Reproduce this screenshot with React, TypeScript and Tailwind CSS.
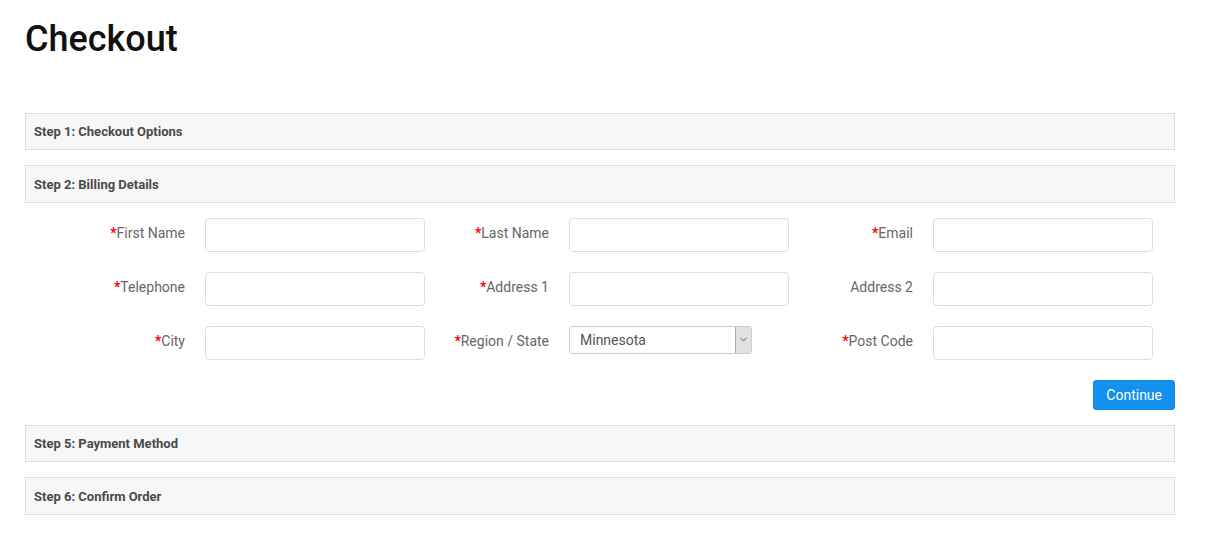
import { ChevronDown } from 'lucide-react'

function Panel({ title }: { title: string }) {
  return (
    <div className="h-[37.5px] bg-[#f7f7f7] border border-[#dddddd] flex items-center px-[8px] pt-[1px]">
      <span className="text-[13px] font-bold text-[#4a4a4a]">{title}</span>
    </div>
  )
}

function Field({ label, required, children }: { label: string; required?: boolean; children?: React.ReactNode }) {
  return (
    <div className="flex items-start gap-[20px] w-[364px] shrink-0">
      <label className="w-[124px] shrink-0 pt-[5px] leading-[20px] text-right text-[14px] text-[#666666]">
        {required && <span className="text-[#ff0000] font-bold">*</span>}
        {label}
      </label>
      {children ?? (
        <input className="w-[220px] h-[34px] shrink-0 border border-[#dddddd] rounded-[4px] bg-white" />
      )}
    </div>
  )
}

function RegionSelect() {
  return (
    <div className="w-[220px] h-[34px] flex items-start">
      <div className="w-[183px] h-[28px] border border-[#cccccc] rounded-[3px] bg-white flex items-center justify-between text-[14px] text-[#555555]">
        <span className="pl-[10px] pt-[1px]">Minnesota</span>
        <div className="w-[16px] h-full bg-[#e1e1e1] border-l border-[#aaaaaa] flex items-center justify-center rounded-r-[2px]">
          <ChevronDown className="w-[11px] h-[11px] text-[#333333]" strokeWidth={1.75} />
        </div>
      </div>
    </div>
  )
}

export default function App() {
  return (
    <div className="min-h-screen bg-white px-[25px] pt-[20px]" style={{ fontFamily: 'Roboto, "Liberation Sans", sans-serif' }}>
      <h1 className="text-[36px] font-medium leading-[1.1] text-[#111111]">Checkout</h1>

      <div className="mt-[53px] w-[1150px] flex flex-col">
        <Panel title="Step 1: Checkout Options" />
        <div className="mt-[15px]">
          <Panel title="Step 2: Billing Details" />
        </div>
        <div className="pt-[15px] flex flex-col gap-[20px]">
          <div className="flex pl-[36px]">
            <Field label="First Name" required />
            <Field label="Last Name" required />
            <Field label="Email" required />
          </div>
          <div className="flex pl-[36px]">
            <Field label="Telephone" required />
            <Field label="Address 1" required />
            <Field label="Address 2" />
          </div>
          <div className="flex pl-[36px]">
            <Field label="City" required />
            <Field label="Region / State" required>
              <RegionSelect />
            </Field>
            <Field label="Post Code" required />
          </div>
          <div className="flex justify-end">
            <button className="h-[30px] px-[12px] pt-[1px] bg-[#1490ee] text-white text-[14px] rounded-[3px] border border-[#1283d8]">
              Continue
            </button>
          </div>
        </div>
        <div className="mt-[15px]">
          <Panel title="Step 5: Payment Method" />
        </div>
        <div className="mt-[15px]">
          <Panel title="Step 6: Confirm Order" />
        </div>
      </div>
    </div>
  )
}
